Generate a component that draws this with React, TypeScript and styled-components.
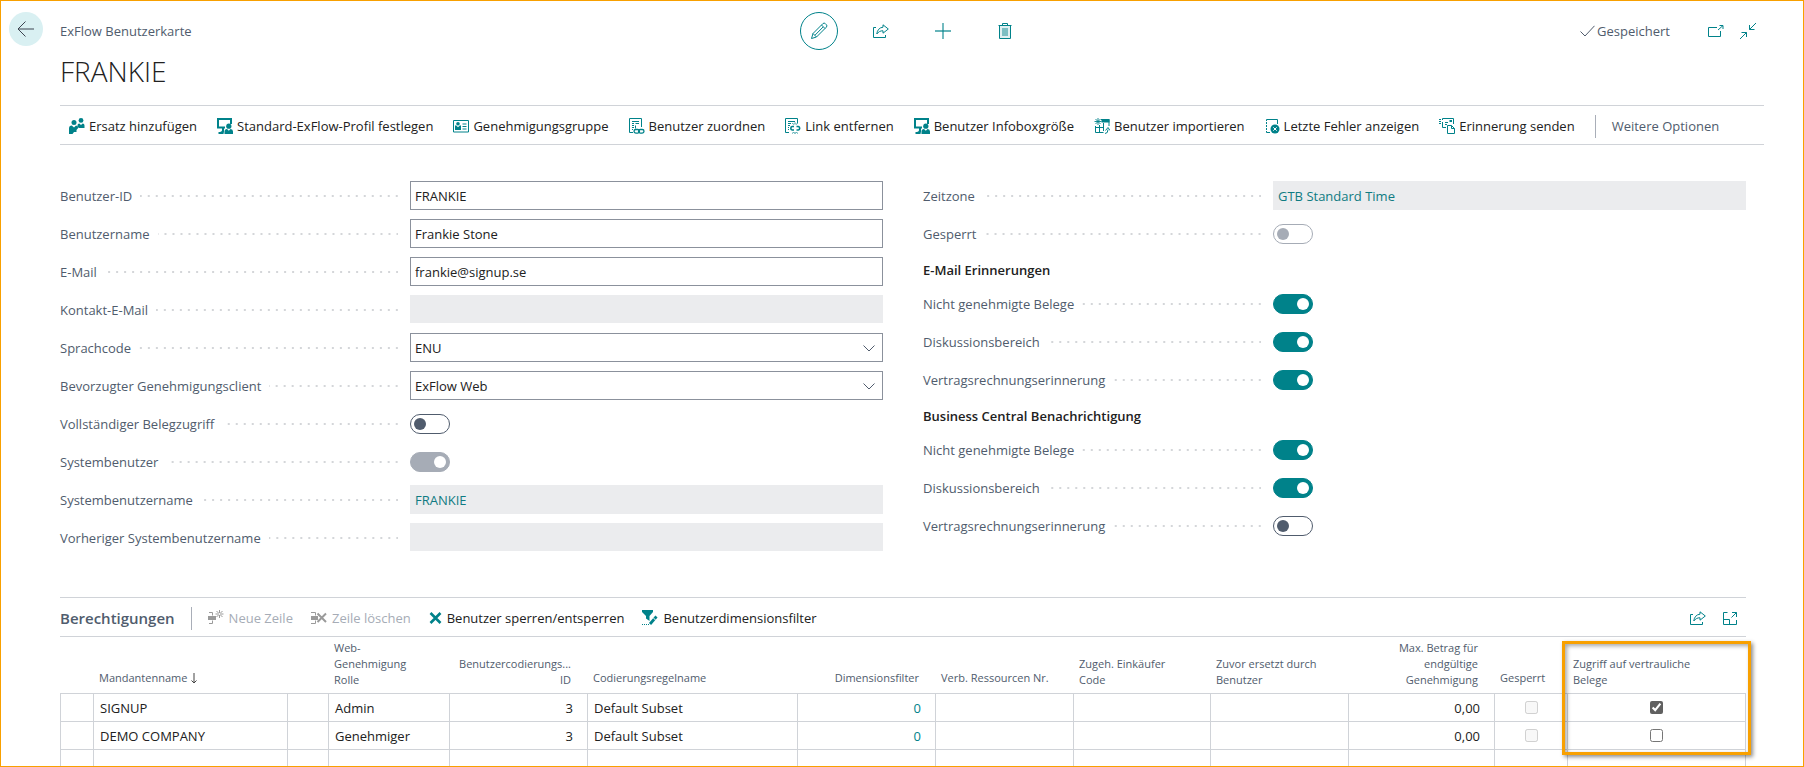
import React, { useId } from 'react';
import styled, { createGlobalStyle, css } from 'styled-components';

const teal = '#00828a';
const slate = '#505c6d';
const ink = '#212121';
const line = '#d0d3d8';
const orange = '#f8a000';
const muted = '#a6acb6';

const GlobalStyle = createGlobalStyle`
  *, *::before, *::after { box-sizing: border-box; }
  body { margin: 0; background: #fff; }
  body, button, input, select { font-family: 'Open Sans', 'Noto Sans', sans-serif; font-size: 13px; }
  button { border: 0; padding: 0; background: none; color: inherit; cursor: pointer; }
  a { color: ${teal}; text-decoration: none; }
  svg { display: block; flex: none; }
`;

const Page = styled.div`
  display: grid;
  grid-template-columns: 59px minmax(0, 1fr);
  align-items: start;
  min-height: 100vh;
  border: 1px solid ${orange};
  color: ${ink};
  line-height: 20px;
`;

const BackButton = styled.button`
  display: grid;
  place-items: center;
  width: 34px;
  height: 34px;
  margin: 11px 8px;
  border-radius: 50%;
  background: #d9f0f2;
`;

const Content = styled.div`
  padding: 11px 39px 0 0;
`;

const Header = styled.header`
  display: grid;
  grid-template-columns: 1fr auto 1fr;
  align-items: center;
  color: ${slate};
`;

const CardActions = styled.div`
  display: flex;
  gap: 24px;
  color: ${teal};
`;

const RoundButton = styled.button<{ $ringed?: boolean }>`
  display: grid;
  place-items: center;
  width: 38px;
  height: 38px;
  border-radius: 50%;
  ${(p) => p.$ringed && css`border: 1px solid ${teal};`}
`;

const Status = styled.div`
  display: flex;
  align-items: center;
  justify-content: flex-end;
  gap: 2px;
  padding-right: 8px;
`;

const WindowButtons = styled.div`
  display: flex;
  align-items: center;
  gap: 16px;
  margin-left: 36px;
  color: ${teal};
`;

const Title = styled.h1`
  margin: 1px 0 14px;
  font-size: 28px;
  font-weight: 300;
  line-height: 40px;
`;

const ActionBar = styled.nav`
  display: flex;
  align-items: center;
  gap: 20px;
  height: 40px;
  padding: 2px 0 0 9px;
  border-top: 1px solid ${line};
  border-bottom: 1px solid ${line};
`;

const ActionButton = styled.button<{ $gap?: number }>`
  display: flex;
  align-items: center;
  gap: ${(p) => p.$gap ?? 4}px;
  line-height: 20px;
  white-space: nowrap;
  svg { color: ${teal}; }
  &:disabled { color: ${muted}; cursor: default; }
  &:disabled svg { color: #9a9a9a; }
`;

const Divider = styled.span`
  width: 1px;
  height: 23px;
  background: #a9aeb8;
`;

const MoreActions = styled.div`
  display: flex;
  align-items: center;
  gap: 16px;
`;

const MoreButton = styled.button`
  color: ${slate};
`;

const Body = styled.main`
  padding-right: 18px;
`;

const Form = styled.form`
  display: grid;
  grid-template-columns: 1fr 1fr;
  gap: 40px;
  margin: 32px 0 40px;
  align-items: start;
`;

const FieldRow = styled.div`
  display: grid;
  grid-template-columns: 350fr 473fr;
  align-items: center;
  height: 38px;
`;

const Caption = styled.div`
  display: flex;
  align-items: center;
  gap: 8px;
  padding-right: 12px;
  color: ${slate};
  white-space: nowrap;
`;

const Dots = styled.span`
  flex: 1;
  height: 2px;
  background: linear-gradient(to left, #d4d6d9 2px, transparent 2px) right / 8px 2px repeat-x;
`;

const fieldBox = css`
  display: block;
  width: 100%;
  height: 29px;
  margin: 0 0 1px;
  padding: 1px 4px 0;
  border: 1px solid #8b919c;
  border-radius: 0;
  background: #fff;
  color: ${ink};
  line-height: 26px;
`;

const TextInput = styled.input`
  ${fieldBox}
  &:disabled { height: 28px; margin-bottom: 2px; border-color: #ebecee; background: #ebecee; }
`;

const SelectWrap = styled.div`
  position: relative;
  svg {
    position: absolute;
    top: 12px;
    right: 8px;
    color: ${slate};
    pointer-events: none;
  }
`;

const Select = styled.select`
  ${fieldBox}
  appearance: none;
`;

const LinkField = styled.a`
  ${fieldBox}
  border-color: #ebecee;
  background: #ebecee;
  color: #0f7b82;
`;

const Toggle = styled.input`
  appearance: none;
  display: block;
  position: relative;
  width: 40px;
  height: 20px;
  margin: 0;
  border: 1px solid ${slate};
  border-radius: 10px;
  color: ${slate};
  &::before {
    content: '';
    position: absolute;
    top: 3px;
    left: 3px;
    width: 12px;
    height: 12px;
    border-radius: 50%;
    background: currentColor;
  }
  &:checked { border-color: ${teal}; background: ${teal}; color: #fff; }
  &:checked::before { left: 23px; }
  &:disabled { border-color: ${muted}; color: ${muted}; }
  &:checked:disabled { background: ${muted}; color: #fff; }
`;

const GroupTitle = styled.h2`
  margin: 0;
  padding-top: 2px;
  font-size: 13px;
  font-weight: 600;
  line-height: 30px;
`;

const PartBar = styled.div`
  display: flex;
  align-items: center;
  gap: 16px;
  height: 40px;
  padding-top: 2px;
  border-top: 1px solid ${line};
  border-bottom: 1px solid ${line};
`;

const PartTitle = styled.h2`
  margin: 0;
  color: ${slate};
  font-size: 15px;
  font-weight: 600;
`;

const PartActions = styled.div`
  display: flex;
  gap: 18px;
`;

const PartTools = styled.div`
  display: flex;
  gap: 17px;
  margin-left: auto;
  padding-right: 9px;
  color: ${teal};
`;

const Grid = styled.table`
  width: 100%;
  table-layout: fixed;
  border-collapse: separate;
  border-spacing: 0;
`;

const HeadCell = styled.th<{ $right?: boolean; $tall?: boolean; $marked?: boolean }>`
  position: relative;
  height: 57px;
  padding: 3px ${(p) => (p.$right ? 16 : 4)}px 5px 6px;
  border-bottom: 1px solid ${line};
  color: ${slate};
  font-size: 11px;
  font-weight: 400;
  line-height: ${(p) => (p.$tall ? 16 : 20)}px;
  text-align: ${(p) => (p.$right ? 'right' : 'left')};
  vertical-align: bottom;
  white-space: pre-line;
  ${(p) =>
    p.$marked &&
    css`
      &::after {
        content: '';
        position: absolute;
        top: 4px;
        left: -5px;
        right: -5px;
        height: 114px;
        border: 3px solid ${orange};
        box-shadow: 2px 2px 4px rgba(0, 0, 0, 0.45), inset 2px 2px 4px rgba(0, 0, 0, 0.35);
        pointer-events: none;
      }
    `}
`;

const SortLabel = styled.span`
  display: flex;
  align-items: center;
  gap: 4px;
`;

const Cell = styled.td<{ $align?: string; $blank?: boolean }>`
  height: ${(p) => (p.$blank ? 16 : 28)}px;
  padding: 0 ${(p) => (p.$align === 'right' ? 14 : 6)}px 0 6px;
  border-left: 1px solid ${line};
  border-bottom: ${(p) => (p.$blank ? '0' : `1px solid ${line}`)};
  text-align: ${(p) => p.$align ?? 'left'};
  white-space: nowrap;
  &:last-child { border-right: 1px solid ${line}; }
`;

const Tick = styled.input`
  display: block;
  width: 13px;
  height: 13px;
  margin: 0 auto;
  accent-color: #606060;
`;

const Svg = ({ w = 16, h = 16, children, sw = 1 }: { w?: number; h?: number; sw?: number; children: React.ReactNode }) => (
  <svg width={w} height={h} viewBox={`0 0 ${w} ${h}`} fill="none" stroke="currentColor" strokeWidth={sw} aria-hidden="true">
    {children}
  </svg>
);

const solid = { fill: 'currentColor', stroke: 'none' };

const BackIcon = () => (
  <Svg w={18} h={16}>
    <path d="M17 8H1.500M8.500 .5 1 8l7.500 7.500" stroke="#3c4450" />
  </Svg>
);
const PencilIcon = () => (
  <Svg w={18} h={18}>
    <path d="M1.500 16.500 3 11.500 12.800 1.700a1.800 1.800 0 0 1 2.600 0l.9.9a1.800 1.800 0 0 1 0 2.600L6.500 15Z M11.500 3l3.500 3.500M3 11.500 6.500 15M5 13.200l8.200-8.300" />
  </Svg>
);
const ShareIcon = () => (
  <Svg w={16} h={14}>
    <path d="M3 3.500H.5v10h12V11" />
    <path d="M10 .8 15.300 5 10 9.200V6.800C7.500 6.600 5.500 7.800 3.800 10 4.200 6 6.500 3.500 10 3.200Z" />
  </Svg>
);
const PlusIcon = () => (
  <Svg w={16} h={16} sw={2}>
    <path d="M8 0v16" opacity=".55" />
    <path d="M0 8h16" opacity=".6" />
  </Svg>
);
const TrashIcon = () => (
  <Svg w={14} h={16}>
    <rect x="2" y="3" width="10" height="12" fill="currentColor" stroke="none" opacity=".12" />
    <path d="M.5 2.500h13M4.500 2.500v-2h5v2M1.500 2.500v13h11v-13" />
    <path d="M5 5v8M7 5v8M9 5v8" strokeWidth=".9" />
  </Svg>
);
const CheckIcon = () => (
  <Svg w={15} h={12}>
    <path d="M.5 6.500 5 11 14.500 .8" />
  </Svg>
);
const PopOutIcon = () => (
  <Svg w={16} h={12}>
    <path d="M9 2.500H.5v9h12V6" />
    <path d="m10 5 5-4.500M11.500 .5H15V4" />
  </Svg>
);
const ShrinkIcon = () => (
  <Svg w={16} h={16}>
    <path d="M16 0 9.500 6.500M9.500 2v4.500h5M0 16l6.500-6.500M1.500 9.500h5V14" />
  </Svg>
);
const ExpandIcon = () => (
  <Svg w={14} h={13}>
    <path d="M4.500 .5h-4v12h13V8M.5 7.500h6v5M8.500 5.500l5-5M9 .5h4.500V5" />
  </Svg>
);
const ChevronIcon = () => (
  <Svg w={12} h={7}>
    <path d="M.5 .5 6 6 11.500 .5" />
  </Svg>
);
const SortIcon = () => (
  <Svg w={6} h={11}>
    <path d="M3 0v10M.5 7.500 3 10l2.500-2.500" stroke="#444" />
  </Svg>
);

const PeopleIcon = () => (
  <Svg>
    <g {...solid}>
      <circle cx="12" cy="2.400" r="2.400" />
      <path d="M8.500 9V7.200Q8.500 5.500 10.300 5.500L12 7l1.700-1.500q1.800 0 1.800 2V10H10Z" />
      <circle cx="5" cy="4.500" r="2.500" />
      <path d="M0 10.500Q0 7.500 2.800 7.500L5 9.500 7 7.500q2.200 0 2.200 2.500L7.500 12V14H5L3.500 16H0Z" />
    </g>
  </Svg>
);
const MonitorUserIcon = () => (
  <Svg>
    <path d="M8 9.500H1V1h13v5" strokeWidth="2" />
    <g {...solid}>
      <path d="M5 10h2v3.500L6.500 16H1.500v-2Q5 14 5 12Z" />
      <circle cx="11.800" cy="8.200" r="2.600" />
      <path d="M7.500 16v-2.500q0-2.500 2.500-2.500l1.800 1.800 1.800-1.800q2.400 0 2.400 2.500V16Z" />
    </g>
  </Svg>
);
const CardIcon = () => (
  <Svg h={13}>
    <path d="M.5 .5h15v11.500H.5ZM9.500 4h4M9.500 6.500h4M9.500 9h4" />
    <g {...solid}>
      <circle cx="5" cy="3.800" r="1.800" />
      <path d="M2 10V6Q2 5.200 3 5.200L5 7.200 7 5.200Q8 5.200 8 6V10Z" />
    </g>
  </Svg>
);
const DocLinkIcon = () => (
  <Svg>
    <path d="M4 14.500H.500V.500h12V9M3 3.500h7M3 5.500h2M6.500 5.500H10M3 7.500h2M6.500 7.500v3M3 9.500h2M3 11.500h1" />
    <rect x="5" y="11.500" width="5.500" height="3.600" rx="1.800" strokeWidth="1.300" />
    <rect x="9.500" y="11.500" width="5.500" height="3.600" rx="1.800" strokeWidth="1.300" />
  </Svg>
);
const DocUnlinkIcon = () => (
  <Svg>
    <path d="M4 14.500H.500V.500h12V5M3 3.500h7M3 5.500h3M3 7.500h2M3 9.500h1M3 11.500h1" />
    <path d="M9 8.500H7.200a1.800 1.800 0 0 0 0 3.500H9M11.500 8.500h1.800a1.800 1.800 0 0 1 0 3.500h-1.800" strokeWidth="1.600" />
    <path d="M7.500 5l1 1.500M10 4.500v2M12.500 5l-1 1.500M7.500 15.500l1-1.500M10 16v-2M12.500 15.500l-1-1.500" strokeWidth=".9" />
  </Svg>
);
const ImportIcon = () => (
  <Svg>
    <path d="M1.500 8v6.500h8M1.500 9.500h8M5.500 7v7.500M9.500 5v8M7 1.500h8V8" />
    <path d="M7.500 1h8v3.500h-8Z" {...solid} />
    <path d="M4 0v7M.5 3.500h7M1.500 1l5 5M6.500 1l-5 5" strokeWidth=".9" />
    <path d="M11 15.500q3 0 3-4M11.500 12.500 14 9.500l2 3" />
  </Svg>
);
const LogErrorIcon = () => (
  <Svg w={15}>
    <path d="M5 14.500H1.500V1.500h11V6" />
    <path d="M1 3.500h2M1 6.500h2M1 9.500h2M1 12.500h2" stroke="#fff" />
    <circle cx="10" cy="11" r="4.500" {...solid} />
    <path d="m8.300 9.300 3.400 3.400M11.700 9.300l-3.400 3.400" stroke="#fff" />
  </Svg>
);
const ReminderIcon = () => (
  <Svg>
    <path d="M3.500 2V.500h11V6M3.500 4v5.500H7M6 4.500h3M6 6.500h2M0 1.500h2M0 3.500h2M0 5.500h2" />
    <rect x="10.500" y="2" width="2.500" height="2" {...solid} />
    <path d="M8.500 7.500h4l3 3v5h-7ZM12.500 7.500v3h3" fill="#fff" />
  </Svg>
);
const RowNewIcon = () => (
  <Svg>
    <path d="M1 2.500h3.500v3M1 13.500h3.500v-3" />
    <rect x="0" y="6" width="8" height="4" {...solid} />
    <path d="M11.500 0v8M7.500 4h8M8.500 1l6 6M14.500 1l-6 6" />
    <circle cx="11.500" cy="4" r="1" fill="#fff" stroke="none" />
  </Svg>
);
const RowDeleteIcon = () => (
  <Svg>
    <path d="M0 2.500h4.500v3M0 13.500h4.500v-3" />
    <rect x="0" y="6" width="7" height="4" {...solid} />
    <path d="m6.500 3.500 8.500 8.500M15 3.500 6.500 12" strokeWidth="2" />
  </Svg>
);
const CrossIcon = () => (
  <Svg w={13} h={12}>
    <path d="m1.500 1 10 10M11.500 1l-10 10" strokeWidth="2.600" />
  </Svg>
);
const FilterEditIcon = () => (
  <Svg>
    <path d="M0 0h11v2L7.500 6v5L4 8.500V6L0 2Z" {...solid} />
    <path d="M0 14.500h8" strokeDasharray="1 1" />
    <path d="M8 14 14.500 6.500" strokeWidth="2.800" />
    <path d="m11.300 8 2.500 2.200" stroke="#fff" />
  </Svg>
);

type FieldProps = { caption: string; children: (id: string) => React.ReactNode };

const Field = ({ caption, children }: FieldProps) => {
  const id = useId();
  return (
    <FieldRow>
      <Caption>
        <label htmlFor={id}>{caption}</label>
        <Dots />
      </Caption>
      {children(id)}
    </FieldRow>
  );
};

const TextField = ({ caption, value, disabled }: { caption: string; value?: string; disabled?: boolean }) => (
  <Field caption={caption}>{(id) => <TextInput id={id} defaultValue={value} disabled={disabled} />}</Field>
);

const SelectField = ({ caption, value }: { caption: string; value: string }) => (
  <Field caption={caption}>
    {(id) => (
      <SelectWrap>
        <Select id={id} defaultValue={value}>
          <option>{value}</option>
        </Select>
        <ChevronIcon />
      </SelectWrap>
    )}
  </Field>
);

const ToggleField = ({ caption, on, disabled }: { caption: string; on?: boolean; disabled?: boolean }) => (
  <Field caption={caption}>
    {(id) => <Toggle id={id} type="checkbox" role="switch" defaultChecked={on} disabled={disabled} />}
  </Field>
);

const LookupField = ({ caption, value }: { caption: string; value: string }) => (
  <Field caption={caption}>
    {(id) => (
      <LinkField id={id} href="#lookup" aria-label={`${caption}: ${value}`}>
        {value}
      </LinkField>
    )}
  </Field>
);

const actions: [string, () => React.ReactElement][] = [
  ['Ersatz hinzufügen', PeopleIcon],
  ['Standard-ExFlow-Profil festlegen', MonitorUserIcon],
  ['Genehmigungsgruppe', CardIcon],
  ['Benutzer zuordnen', DocLinkIcon],
  ['Link entfernen', DocUnlinkIcon],
  ['Benutzer Infoboxgröße', MonitorUserIcon],
  ['Benutzer importieren', ImportIcon],
  ['Letzte Fehler anzeigen', LogErrorIcon],
  ['Erinnerung senden', ReminderIcon],
];

type Column = { title: string; width?: number; right?: boolean; tall?: boolean; sorted?: boolean; marked?: boolean };

const columns: Column[] = [
  { title: '', width: 33 },
  { title: 'Mandantenname', width: 194, sorted: true },
  { title: '', width: 41 },
  { title: 'Web-\nGenehmigung\nRolle', width: 121, tall: true },
  { title: 'Benutzercodierungs...\nID', width: 138, right: true, tall: true },
  { title: 'Codierungsregelname' },
  { title: 'Dimensionsfilter', width: 138, right: true },
  { title: 'Verb. Ressourcen Nr.', width: 138 },
  { title: 'Zugeh. Einkäufer\nCode', width: 137, tall: true },
  { title: 'Zuvor ersetzt durch\nBenutzer', width: 138, tall: true },
  { title: 'Max. Betrag für\nendgültige\nGenehmigung', width: 146, right: true, tall: true },
  { title: 'Gesperrt', width: 73 },
  { title: 'Zugriff auf vertrauliche\nBelege', width: 179, tall: true, marked: true },
];

const rows = [
  { company: 'SIGNUP', role: 'Admin', confidential: true },
  { company: 'DEMO COMPANY', role: 'Genehmiger', confidential: false },
];

export default function App() {
  return (
    <>
      <GlobalStyle />
      <Page>
        <BackButton aria-label="Zurück">
          <BackIcon />
        </BackButton>
        <Content>
          <Header>
            <span>ExFlow Benutzerkarte</span>
            <CardActions>
              <RoundButton $ringed aria-label="Bearbeiten"><PencilIcon /></RoundButton>
              <RoundButton aria-label="Teilen"><ShareIcon /></RoundButton>
              <RoundButton aria-label="Neu"><PlusIcon /></RoundButton>
              <RoundButton aria-label="Löschen"><TrashIcon /></RoundButton>
            </CardActions>
            <Status>
              <CheckIcon />
              <span>Gespeichert</span>
              <WindowButtons>
                <button aria-label="In neuem Fenster öffnen"><PopOutIcon /></button>
                <button aria-label="Verkleinern"><ShrinkIcon /></button>
              </WindowButtons>
            </Status>
          </Header>
          <Title>FRANKIE</Title>
          <ActionBar>
            {actions.map(([label, Icon]) => (
              <ActionButton key={label}>
                <Icon />
                {label}
              </ActionButton>
            ))}
            <MoreActions>
              <Divider />
              <MoreButton>Weitere Optionen</MoreButton>
            </MoreActions>
          </ActionBar>

          <Body>
            <Form>
              <div>
                <TextField caption="Benutzer-ID" value="FRANKIE" />
                <TextField caption="Benutzername" value="Frankie Stone" />
                <TextField caption="E-Mail" value="frankie@signup.se" />
                <TextField caption="Kontakt-E-Mail" disabled />
                <SelectField caption="Sprachcode" value="ENU" />
                <SelectField caption="Bevorzugter Genehmigungsclient" value="ExFlow Web" />
                <ToggleField caption="Vollständiger Belegzugriff" />
                <ToggleField caption="Systembenutzer" on disabled />
                <LookupField caption="Systembenutzername" value="FRANKIE" />
                <TextField caption="Vorheriger Systembenutzername" disabled />
              </div>
              <div>
                <LookupField caption="Zeitzone" value="GTB Standard Time" />
                <ToggleField caption="Gesperrt" disabled />
                <GroupTitle>E-Mail Erinnerungen</GroupTitle>
                <ToggleField caption="Nicht genehmigte Belege" on />
                <ToggleField caption="Diskussionsbereich" on />
                <ToggleField caption="Vertragsrechnungserinnerung" on />
                <GroupTitle>Business Central Benachrichtigung</GroupTitle>
                <ToggleField caption="Nicht genehmigte Belege" on />
                <ToggleField caption="Diskussionsbereich" on />
                <ToggleField caption="Vertragsrechnungserinnerung" />
              </div>
            </Form>

            <section>
              <PartBar>
                <PartTitle>Berechtigungen</PartTitle>
                <Divider />
                <PartActions>
                  <ActionButton $gap={5} disabled><RowNewIcon />Neue Zeile</ActionButton>
                  <ActionButton $gap={5} disabled><RowDeleteIcon />Zeile löschen</ActionButton>
                  <ActionButton $gap={5}><CrossIcon />Benutzer sperren/entsperren</ActionButton>
                  <ActionButton $gap={5}><FilterEditIcon />Benutzerdimensionsfilter</ActionButton>
                </PartActions>
                <PartTools>
                  <button aria-label="Teilen"><ShareIcon /></button>
                  <button aria-label="Erweitern"><ExpandIcon /></button>
                </PartTools>
              </PartBar>
              <Grid>
                <colgroup>
                  {columns.map((c, i) => (
                    <col key={i} width={c.width} />
                  ))}
                </colgroup>
                <thead>
                  <tr>
                    {columns.map((c, i) => (
                      <HeadCell key={i} $right={c.right} $tall={c.tall} $marked={c.marked}>
                        {c.sorted ? <SortLabel>{c.title}<SortIcon /></SortLabel> : c.title}
                      </HeadCell>
                    ))}
                  </tr>
                </thead>
                <tbody>
                  {rows.map((r) => (
                    <tr key={r.company}>
                      <Cell />
                      <Cell>{r.company}</Cell>
                      <Cell />
                      <Cell>{r.role}</Cell>
                      <Cell $align="right">3</Cell>
                      <Cell>Default Subset</Cell>
                      <Cell $align="right"><a href="#dimensionen">0</a></Cell>
                      <Cell />
                      <Cell />
                      <Cell />
                      <Cell $align="right">0,00</Cell>
                      <Cell><Tick type="checkbox" disabled aria-label={`Gesperrt ${r.company}`} /></Cell>
                      <Cell>
                        <Tick
                          type="checkbox"
                          defaultChecked={r.confidential}
                          aria-label={`Zugriff auf vertrauliche Belege ${r.company}`}
                        />
                      </Cell>
                    </tr>
                  ))}
                  <tr>
                    {columns.map((_, i) => (
                      <Cell key={i} $blank />
                    ))}
                  </tr>
                </tbody>
              </Grid>
            </section>
          </Body>
        </Content>
      </Page>
    </>
  );
}
